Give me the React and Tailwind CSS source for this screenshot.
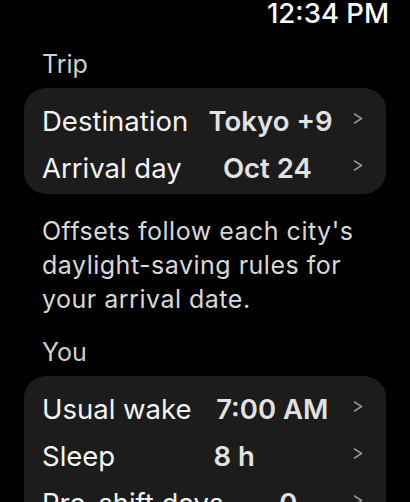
import React from 'react';

const trip = [
  { label: 'Destination', value: 'Tokyo +9' },
  { label: 'Arrival day', value: 'Oct 24' },
];

const you = [
  { label: 'Usual wake', value: '7:00 AM' },
  { label: 'Sleep', value: '8 h' },
  { label: 'Pre-shift days', value: '0' },
];

function Chevron() {
  return (
    <svg
      width="10"
      height="11"
      viewBox="0 0 10 11"
      fill="none"
      stroke="#949494"
      strokeWidth="1.5"
      strokeLinecap="round"
      strokeLinejoin="round"
      className="mb-[6px] shrink-0"
    >
      <polyline points="1.5,1 8.5,5.5 1.5,10" />
    </svg>
  );
}

function Row({ label, value }) {
  return (
    <div className="flex h-[47px] items-center justify-between">
      <span className="text-[27.5px] leading-[47px] text-[#f4f4f4]">{label}</span>
      <span className="text-[27.5px] leading-[47px] font-semibold text-[#e2e2e2]">{value}</span>
      <Chevron />
    </div>
  );
}

function Card({ rows }) {
  return (
    <div className="mx-[24px] rounded-[22px] bg-[#1c1c1c] pt-[10px] pb-[2px] pl-[18px] pr-[23px]">
      {rows.map((r) => (
        <Row key={r.label} {...r} />
      ))}
    </div>
  );
}

function SectionTitle({ children }) {
  return (
    <h2 className="px-[42px] text-[25px] leading-[25px] font-normal text-[#d0d0d0]">{children}</h2>
  );
}

export default function App() {
  return (
    <div
      className="h-[502px] w-[410px] overflow-hidden bg-black"
      style={{ fontFamily: 'Inter, "Noto Sans", sans-serif' }}
    >
      <div className="flex justify-end pr-[21px]">
        <span className="text-[27.5px] leading-[27px] font-medium text-white">12:34 PM</span>
      </div>

      <div className="mt-[25px] mb-[11px]">
        <SectionTitle>Trip</SectionTitle>
      </div>
      <Card rows={trip} />

      <p className="mt-[20px] pl-[42px] pr-[40px] text-[25px] leading-[34px] tracking-[0.5px] text-[#d8d8d8]">
        Offsets follow each city's daylight-saving rules for your arrival date.
      </p>

      <div className="mt-[24px] mb-[11px]">
        <SectionTitle>You</SectionTitle>
      </div>
      <Card rows={you} />
    </div>
  );
}
